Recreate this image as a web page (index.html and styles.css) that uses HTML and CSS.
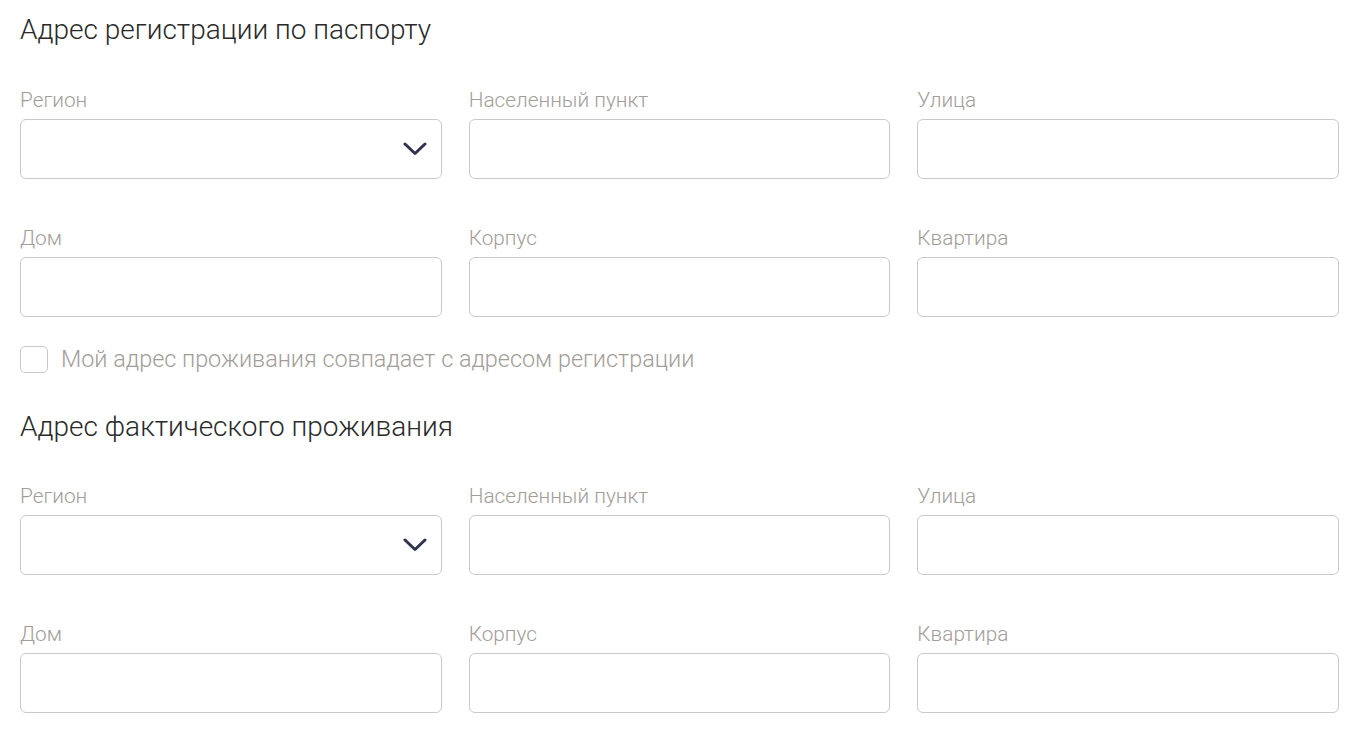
FILE: index.html
```html
<!DOCTYPE html>
<html lang="ru">
<head>
<meta charset="utf-8">
<link rel="stylesheet" href="styles.css">
</head>
<body>
<div class="page">
  <section class="block">
    <h2 class="title">Адрес регистрации по паспорту</h2>
    <div class="grid">
      <div class="field">
        <label class="label">Регион</label>
        <div class="box select">
          <svg class="chev" width="24" height="14" viewBox="0 0 24 14"><path d="M2 2 L12 11.5 L22 2" fill="none" stroke="#2e3250" stroke-width="3" stroke-linecap="round" stroke-linejoin="round"/></svg>
        </div>
      </div>
      <div class="field"><label class="label">Населенный пункт</label><div class="box"></div></div>
      <div class="field"><label class="label">Улица</label><div class="box"></div></div>
      <div class="field"><label class="label">Дом</label><div class="box"></div></div>
      <div class="field"><label class="label">Корпус</label><div class="box"></div></div>
      <div class="field"><label class="label">Квартира</label><div class="box"></div></div>
    </div>
    <div class="check">
      <span class="checkbox"></span>
      <span class="check-text">Мой адрес проживания совпадает с адресом регистрации</span>
    </div>
  </section>
  <section class="block second">
    <h2 class="title">Адрес фактического проживания</h2>
    <div class="grid">
      <div class="field">
        <label class="label">Регион</label>
        <div class="box select">
          <svg class="chev" width="24" height="14" viewBox="0 0 24 14"><path d="M2 2 L12 11.5 L22 2" fill="none" stroke="#2e3250" stroke-width="3" stroke-linecap="round" stroke-linejoin="round"/></svg>
        </div>
      </div>
      <div class="field"><label class="label">Населенный пункт</label><div class="box"></div></div>
      <div class="field"><label class="label">Улица</label><div class="box"></div></div>
      <div class="field"><label class="label">Дом</label><div class="box"></div></div>
      <div class="field"><label class="label">Корпус</label><div class="box"></div></div>
      <div class="field"><label class="label">Квартира</label><div class="box"></div></div>
    </div>
  </section>
</div>
</body>
</html>
```
FILE: styles.css
```css
html, body {
  margin: 0;
  padding: 0;
  background: #ffffff;
}
body {
  font-family: Roboto, "Liberation Sans", sans-serif;
}
.page {
  padding: 13px 13px 0 20px;
}
.title {
  margin: 0;
  font-size: 28px;
  font-weight: 300;
  line-height: 34px;
  color: #2a2a2a;
}
.grid {
  display: grid;
  grid-template-columns: repeat(3, 1fr);
  column-gap: 27px;
  row-gap: 47px;
  margin-top: 41px;
}
.second .grid {
  margin-top: 40px;
}
.field {
  display: flex;
  flex-direction: column;
}
.label {
  font-size: 20.8px;
  font-weight: 300;
  line-height: 24px;
  color: #a29d99;
  margin-bottom: 7px;
}
.box {
  height: 58px;
  border: 1px solid #c9c9c9;
  border-radius: 6px;
  box-sizing: content-box;
  display: flex;
  align-items: center;
  justify-content: flex-end;
}
.select {
  padding-right: 14px;
}
.chev {
  display: block;
}
.check {
  display: flex;
  align-items: center;
  gap: 13px;
  margin-top: 28px;
  height: 28px;
}
.checkbox {
  width: 26px;
  height: 25px;
  border: 1px solid #c9c9c9;
  border-radius: 5px;
  flex: none;
}
.check-text {
  font-size: 23.4px;
  font-weight: 300;
  color: #a29d99;
  line-height: 28px;
}
.second {
  margin-top: 37px;
}
```
